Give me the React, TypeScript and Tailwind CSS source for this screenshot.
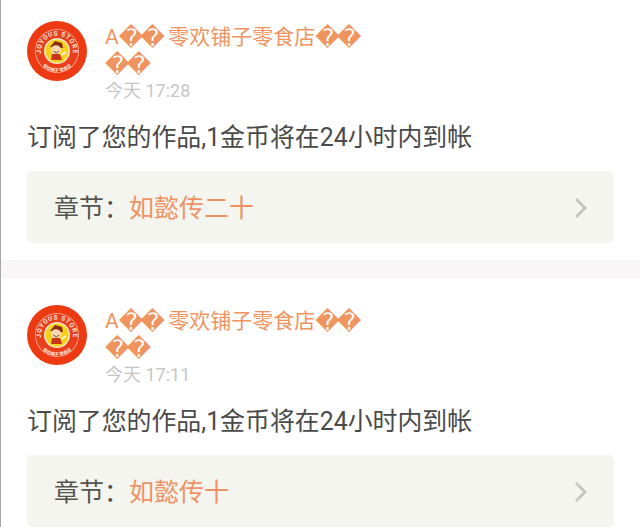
const FONT = "font-['Roboto','Noto_Sans_CJK_SC',sans-serif]";

function Avatar({ id }: { id: string }) {
  return (
    <svg viewBox="0 0 60 60" className="w-[60px] h-[60px] shrink-0">
      <defs>
        <path id={`top-${id}`} d="M14.2 33a16 16 0 1 1 31.6 0" />
        <path id={`bottom-${id}`} d="M9.4 34a21 21 0 0 0 41.2 0" />
      </defs>
      <circle cx="30" cy="30" r="30" fill="#ee3a12" />
      <circle cx="30" cy="30" r="22" fill="#f4b09a" />
      <circle cx="30" cy="30" r="21.2" fill="#e8401c" />
      <circle cx="30" cy="30" r="13" fill="#f9e6c8" />
      <circle cx="30" cy="30" r="11.5" fill="#f5d21e" />
      <text fontSize="6.4" fontWeight="700" fill="#fde9dc" fontFamily="Roboto, sans-serif" letterSpacing="0.7">
        <textPath href={`#top-${id}`} startOffset="50%" textAnchor="middle">JOYOUS STORE</textPath>
      </text>
      <text fontSize="4.4" fontWeight="700" fill="#fde9dc" fontFamily="'Noto Sans CJK SC', sans-serif">
        <textPath href={`#bottom-${id}`} startOffset="50%" textAnchor="middle">零欢铺子 零食店</textPath>
      </text>
      {/* mascot */}
      <path d="M23 26l5-6 7 2 1 5z" fill="#8c2a12" />
      <circle cx="29" cy="29" r="4.8" fill="#f9d9b5" />
      <path d="M25 33h8l2 6H24z" fill="#c9341a" />
      <path d="M26.5 30l3 2 2.5-2" fill="none" stroke="#7a3516" strokeWidth="1" />
      <path d="M34 34l5-3" stroke="#f9f2e6" strokeWidth="1.8" />
    </svg>
  );
}

function Diamonds({ count }: { count: number }) {
  return <span className="font-['DejaVu_Sans'] text-[24px] leading-[20px] tracking-[-3px] align-[-2px]">{"\uFFFD".repeat(count)}</span>;
}

function Notice({ time, chapter, top }: { time: string; chapter: string; top: string }) {
  return (
    <section className={`pl-[27px] pr-[26px] pb-[17px] ${top}`}>
      <div className="flex">
        <Avatar id={time.replace(/\D/g, "")} />
        <div className="ml-[18px] w-[260px] mt-[3px]">
          <p className="text-[21px] leading-[27px] text-[#f0945f] break-all">
            A<Diamonds count={2} /> <span className="ml-[1px]">零欢铺子零食店</span><Diamonds count={4} />
          </p>
          <p className="mt-[1px] text-[18px] leading-[24px] text-[#c6c6c6]">今天 {time}</p>
        </div>
      </div>
      <p className="mt-[19px] text-[24.9px] leading-[32px] text-[#4a4a4a]">订阅了您的作品,1金币将在24小时内到帐</p>
      <div className="mt-[17px] h-[72px] rounded-[5px] bg-[#f5f5f0] flex items-center pt-[2px] pl-[27px] pr-[26px]">
        <span className="mt-[2px] text-[25px] text-[#555550]">章节：</span>
        <span className="mt-[2px] text-[25px] text-[#ee9263]">{chapter}</span>
        <svg viewBox="0 0 14 22" className="ml-auto w-[14px] h-[22px]" fill="none" stroke="#c4c5bf" strokeWidth="2.8">
          <path d="M2 2l9 9-9 9" />
        </svg>
      </div>
    </section>
  );
}

export default function App() {
  return (
    <div className={`relative w-[640px] h-[527px] overflow-hidden bg-white ${FONT}`}>
      <Notice time="17:28" chapter="如懿传二十" top="pt-[21px]" />
      <div className="h-[18px] bg-[#f8f6f6]" />
      <Notice time="17:11" chapter="如懿传十" top="pt-[27px]" />
      <div className="absolute left-0 top-0 h-full w-[1px] bg-[#a8a8a8]" />
    </div>
  );
}
